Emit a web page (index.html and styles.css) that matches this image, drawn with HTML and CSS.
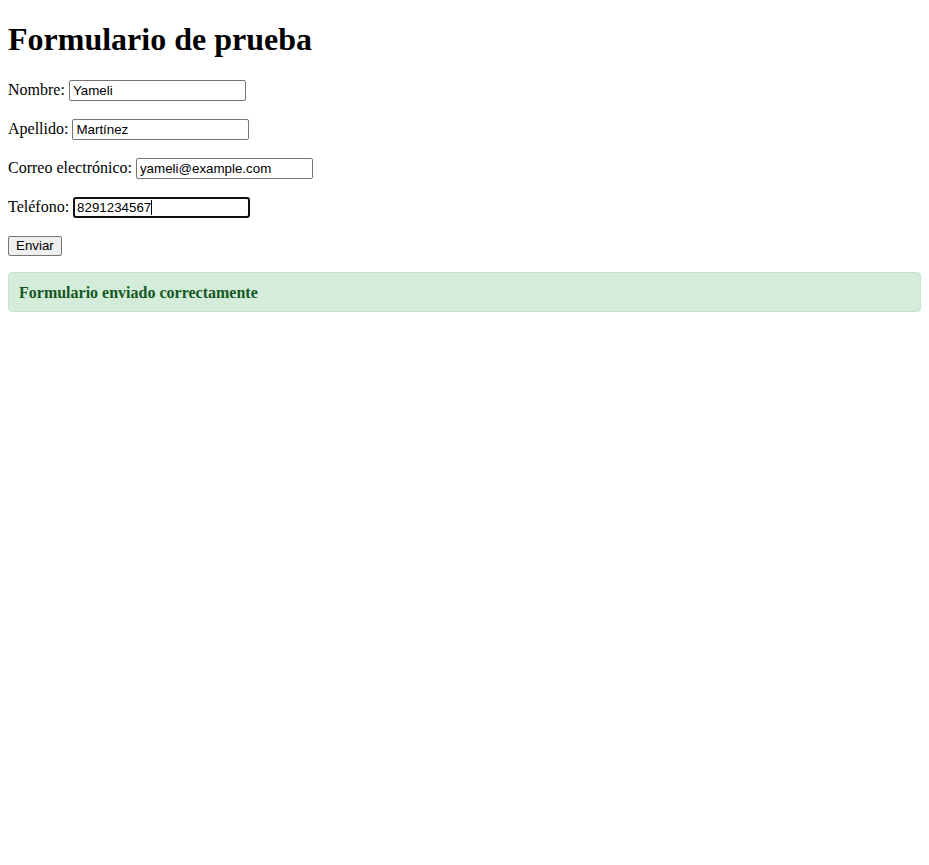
FILE: index.html
```html
<!DOCTYPE html>
<html lang="es">
<head>
<meta charset="utf-8">
<title>Formulario de prueba</title>
<link rel="stylesheet" href="styles.css">
</head>
<body>
<h1 class="title">Formulario de prueba</h1>
<form class="form">
  <p class="row"><label for="nombre">Nombre:</label><input class="field" type="text" id="nombre" value="Yameli"></p>
  <p class="row"><label for="apellido">Apellido:</label><input class="field" type="text" id="apellido" value="Martínez"></p>
  <p class="row"><label for="correo">Correo electrónico:</label><input class="field" type="email" id="correo" value="yameli@example.com"></p>
  <p class="row"><label for="telefono">Teléfono:</label><span class="field-wrap"><input class="field field-active" type="tel" id="telefono" value="8291234567"><span class="caret"></span></span></p>
  <p class="row row-btn"><button class="btn" type="button">Enviar</button></p>
</form>
<div class="alert">Formulario enviado correctamente</div>
</body>
</html>
```
FILE: styles.css
```css
html, body {
  background: #ffffff;
}
body {
  margin: 0 8px 8px;
  padding: 0;
  font-family: "Liberation Serif", "Times New Roman", serif;
  font-size: 16px;
  color: #000000;
}
.title {
  font-size: 32px;
  font-weight: bold;
  margin: 21.44px 0;
  line-height: 37px;
}
.form {
  margin: 0;
}
.row {
  display: flex;
  align-items: baseline;
  gap: 4px;
  height: 23px;
  margin: 16px 0;
}
.row-btn {
  height: 20px;
  align-items: flex-start;
}
.field-wrap {
  position: relative;
  display: inline-block;
}
.field {
  display: inline-block;
  font-family: "Liberation Sans", Arial, sans-serif;
  font-size: 13.333px;
  line-height: 15px;
  width: 169px;
  height: 15px;
  padding: 2px 3px;
  border: 1px solid #767676;
  border-radius: 2px;
  margin: 0;
  color: #000000;
  background: #ffffff;
  box-sizing: content-box;
  outline: none;
}
.field-active {
  border: 2px solid #101010;
  border-radius: 3px;
  padding: 1px 2px;
}
.caret {
  position: absolute;
  left: 78px;
  top: 3px;
  width: 1px;
  height: 15px;
  background: #000000;
}
.btn {
  font-family: "Liberation Sans", Arial, sans-serif;
  font-size: 13.333px;
  line-height: 15px;
  height: 20px;
  box-sizing: border-box;
  color: #000000;
  background: #efefef;
  border: 1px solid #767676;
  border-radius: 2px;
  padding: 1px 7px;
  margin: 0;
}
.alert {
  background: #d4edda;
  color: #155724;
  border: 1px solid #c3e6cb;
  border-radius: 4px;
  padding: 11px 10px 9px;
  font-weight: bold;
}
```
